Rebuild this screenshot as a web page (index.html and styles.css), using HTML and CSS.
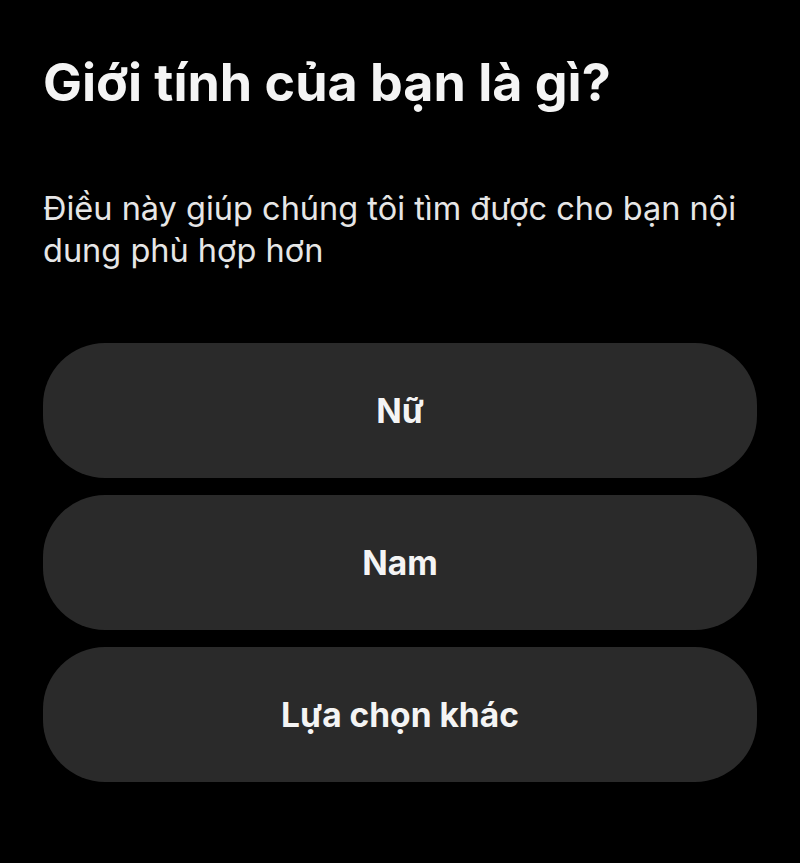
FILE: index.html
```html
<!DOCTYPE html>
<html lang="vi">
<head>
<meta charset="utf-8">
<link rel="stylesheet" href="styles.css">
</head>
<body>
<main class="screen">
  <h1 class="title">Giới tính của bạn là gì?</h1>
  <p class="subtitle">Điều này giúp chúng tôi tìm được cho bạn nội dung phù hợp hơn</p>
  <div class="options">
    <button class="option">Nữ</button>
    <button class="option">Nam</button>
    <button class="option">Lựa chọn khác</button>
  </div>
</main>
</body>
</html>
```
FILE: styles.css
```css
html, body {
  margin: 0;
  padding: 0;
  background: #000;
}
body {
  width: 800px;
  height: 863px;
  overflow: hidden;
  font-family: Inter, "Noto Sans", sans-serif;
}
.screen {
  padding: 49px 43px 0 43px;
}
.title {
  margin: 0;
  color: #f4f4f4;
  font-size: 52px;
  font-weight: 700;
  line-height: 68px;
  letter-spacing: 0;
}
.subtitle {
  margin: 71px 0 0 0;
  color: #e6e6e6;
  font-size: 32.5px;
  font-weight: 400;
  line-height: 42px;
}
.options {
  margin-top: 71px;
  display: flex;
  flex-direction: column;
  gap: 17px;
}
.option {
  height: 135px;
  border: none;
  border-radius: 62px;
  background: #2a2a2a;
  color: #f4f4f4;
  font-family: Inter, "Noto Sans", sans-serif;
  font-size: 33.5px;
  font-weight: 700;
  padding: 0;
}
```
